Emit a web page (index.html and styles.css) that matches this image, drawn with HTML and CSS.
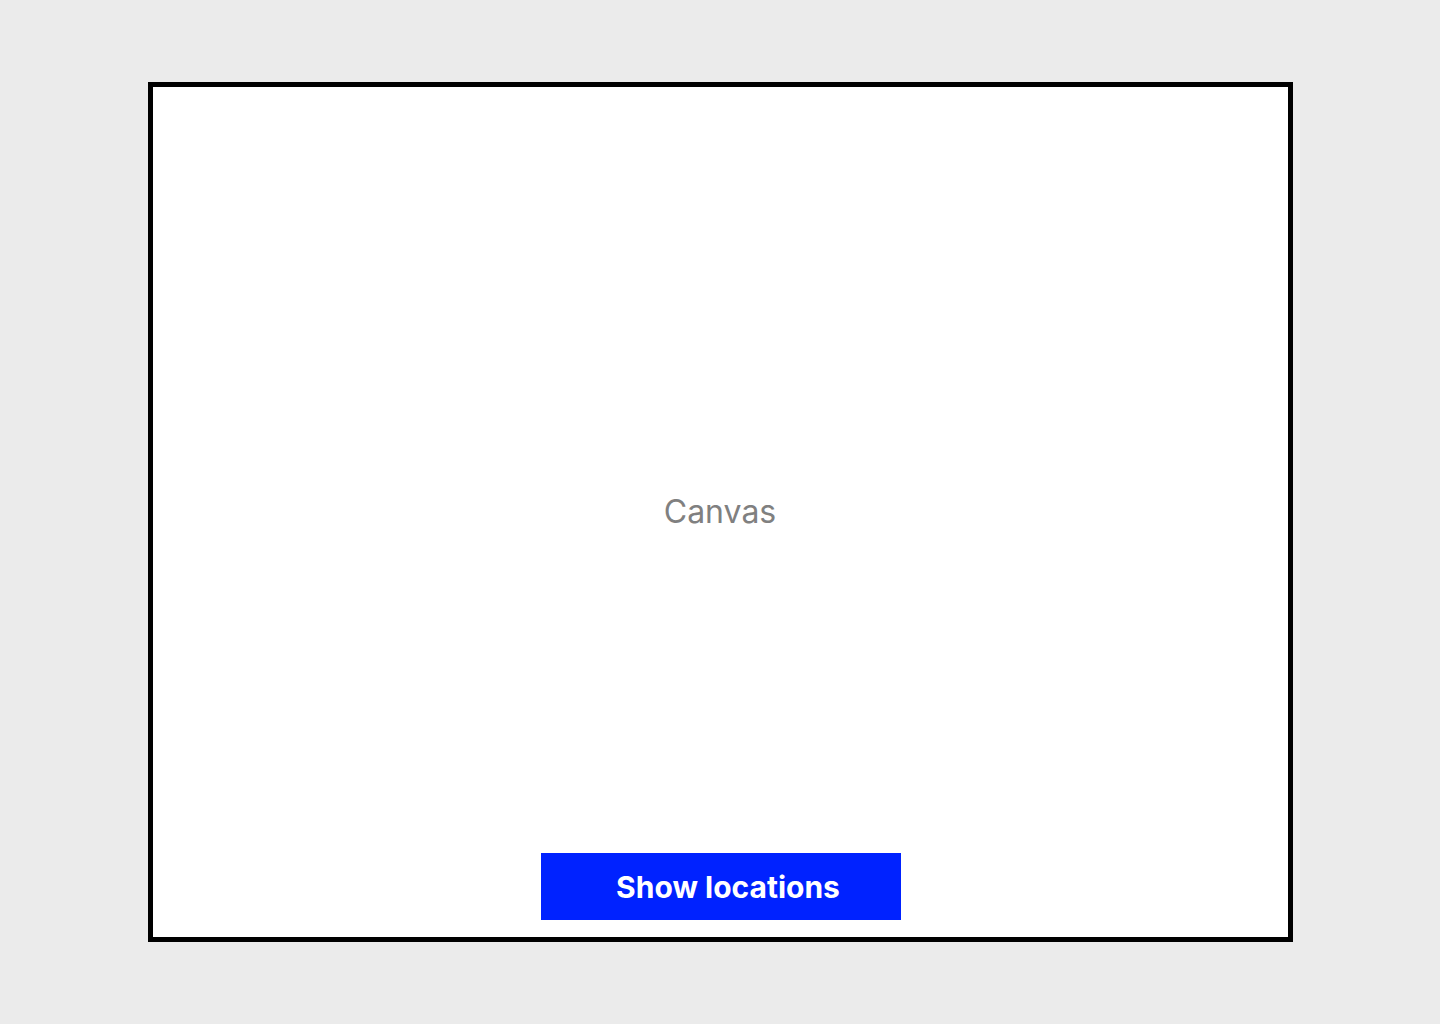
FILE: index.html
```html
<!DOCTYPE html>
<html lang="en">
<head>
<meta charset="utf-8">
<title>Canvas</title>
<link rel="stylesheet" href="styles.css">
</head>
<body>
<main class="frame">
  <div class="canvas-label">Canvas</div>
  <button class="show-btn" type="button">Show locations</button>
</main>
</body>
</html>
```
FILE: styles.css
```css
html, body {
  margin: 0;
  padding: 0;
  height: 100%;
}
body {
  background: #ebebeb;
  display: flex;
  align-items: center;
  justify-content: center;
  font-family: Inter, "Liberation Sans", sans-serif;
}
.frame {
  box-sizing: border-box;
  width: 1145px;
  height: 860px;
  border: 5px solid #000;
  background: #fff;
  display: grid;
  grid-template: 1fr / 1fr;
  justify-items: center;
}
.canvas-label {
  grid-area: 1 / 1;
  align-self: center;
  font-size: 32px;
  color: #808080;
  line-height: 1;
}
.show-btn {
  grid-area: 1 / 1;
  align-self: end;
  margin: 0 0 17px 1px;
  width: 360px;
  height: 67px;
  border: 0;
  border-radius: 0;
  background: #0022ff;
  color: #fff;
  font-family: Inter, "Liberation Sans", sans-serif;
  font-weight: 700;
  font-size: 30px;
  padding: 0 0 0 15px;
  cursor: pointer;
}
```
